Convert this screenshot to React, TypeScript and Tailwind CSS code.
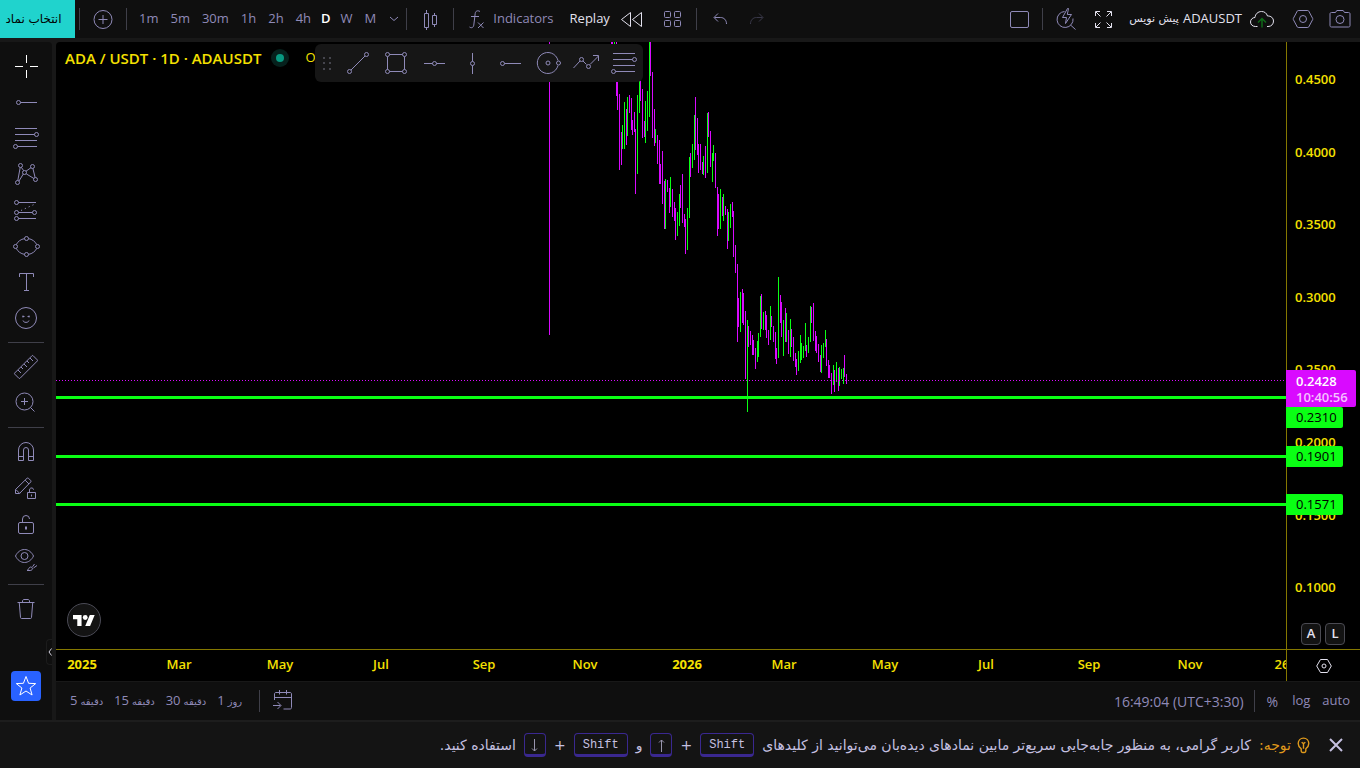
import type { ReactNode } from "react";

type Candle = [x: number, high: number, low: number, up: 0 | 1];

// one entry per bar: x, top and bottom in pane pixels, and direction
const CANDLES: Candle[] = [
  [493, 0, 293, 0], [555, 0, 30, 0], [556, 0, 34, 0], [558, 0, 20, 1], [560, 0, 54, 0], [561, 20, 68, 0],
  [563, 52, 128, 0], [565, 90, 123, 0], [566, 83, 107, 1], [568, 60, 107, 1], [570, 67, 103, 0], [571, 55, 94, 1],
  [573, 53, 71, 0], [575, 56, 88, 0], [576, 78, 93, 0], [578, 70, 90, 0], [579, 87, 152, 0], [581, 53, 132, 1],
  [583, 33, 71, 1], [584, 28, 59, 0], [586, 47, 96, 0], [588, 79, 95, 0], [589, 59, 101, 1], [591, 49, 89, 1],
  [593, 0, 75, 1], [594, 0, 34, 0], [596, 30, 96, 0], [598, 67, 104, 0], [599, 87, 101, 1], [601, 93, 122, 0],
  [603, 98, 142, 0], [604, 122, 142, 0], [606, 109, 162, 0], [608, 139, 187, 0], [609, 137, 187, 1], [611, 138, 150, 0],
  [613, 146, 171, 0], [614, 135, 165, 1], [616, 147, 175, 0], [618, 160, 179, 0], [619, 166, 198, 0], [621, 170, 194, 1],
  [623, 152, 184, 1], [624, 143, 166, 0], [626, 132, 181, 0], [628, 172, 185, 0], [629, 177, 212, 0], [631, 166, 208, 1],
  [633, 115, 176, 1], [634, 111, 135, 0], [636, 102, 126, 1], [638, 73, 118, 1], [639, 55, 108, 0], [641, 76, 113, 0],
  [642, 102, 131, 0], [644, 102, 128, 0], [646, 120, 132, 0], [647, 114, 133, 1], [649, 104, 136, 0], [651, 71, 131, 1],
  [652, 70, 95, 0], [654, 89, 125, 0], [656, 111, 140, 1], [657, 103, 119, 1], [659, 111, 146, 0], [661, 145, 194, 0],
  [662, 152, 187, 0], [664, 147, 187, 1], [666, 155, 174, 0], [667, 152, 179, 1], [669, 164, 173, 0], [671, 167, 207, 0],
  [672, 170, 199, 1], [674, 162, 186, 1], [676, 160, 175, 0], [677, 169, 215, 0], [679, 203, 231, 0], [681, 222, 300, 0],
  [682, 256, 285, 0], [684, 250, 290, 1], [686, 247, 281, 0], [687, 251, 283, 0], [689, 269, 337, 0], [691, 278, 370, 1],
  [692, 284, 305, 0], [694, 289, 303, 0], [696, 293, 313, 0], [697, 298, 313, 0], [699, 306, 327, 0], [701, 299, 320, 1],
  [702, 291, 315, 1], [704, 254, 295, 1], [705, 252, 287, 0], [707, 270, 288, 1], [709, 269, 288, 0], [710, 273, 296, 0],
  [712, 288, 303, 0], [714, 264, 298, 1], [715, 274, 285, 0], [717, 284, 300, 0], [719, 290, 317, 0], [720, 306, 322, 0],
  [722, 235, 316, 1], [724, 253, 281, 0], [725, 260, 295, 0], [727, 278, 314, 1], [729, 266, 300, 0], [730, 271, 300, 1],
  [732, 288, 312, 0], [734, 277, 315, 1], [735, 287, 305, 0], [737, 295, 319, 0], [739, 311, 325, 0], [740, 317, 333, 0],
  [742, 309, 329, 1], [744, 293, 321, 1], [745, 301, 318, 1], [747, 304, 316, 1], [749, 281, 309, 1], [750, 303, 315, 0],
  [752, 295, 311, 1], [754, 264, 300, 1], [755, 265, 281, 0], [757, 261, 299, 0], [759, 289, 309, 0], [760, 294, 311, 0],
  [762, 302, 320, 0], [764, 313, 330, 0], [765, 303, 331, 1], [767, 301, 316, 1], [769, 288, 305, 1], [770, 297, 324, 0],
  [772, 318, 336, 0], [773, 323, 336, 0], [775, 331, 352, 0], [777, 323, 343, 1], [778, 328, 350, 0], [780, 320, 340, 1],
  [782, 326, 349, 0], [783, 325, 344, 1], [785, 327, 337, 1], [787, 326, 342, 1], [788, 313, 335, 0], [790, 332, 342, 0],
];

const LEVELS = [0.231, 0.1901, 0.1571];
const PRICES = [0.45, 0.4, 0.35, 0.3, 0.25, 0.2, 0.15, 0.1];

const MONTHS = [
  { x: 26, label: "2025", year: true },
  { x: 123, label: "Mar" },
  { x: 224, label: "May" },
  { x: 325, label: "Jul" },
  { x: 428, label: "Sep" },
  { x: 529, label: "Nov" },
  { x: 631, label: "2026", year: true },
  { x: 728, label: "Mar" },
  { x: 829, label: "May" },
  { x: 930, label: "Jul" },
  { x: 1033, label: "Sep" },
  { x: 1134, label: "Nov" },
  { x: 1226, label: "26" },
];

const priceToY = (price: number) => Math.round(37 + (0.45 - price) * 1452);

const Icon = ({ children, className = "" }: { children: ReactNode; className?: string }) => (
  <svg
    width="28"
    height="28"
    viewBox="0 0 28 28"
    fill="none"
    stroke="currentColor"
    className={`shrink-0 ${className}`}
    aria-hidden="true"
  >
    {children}
  </svg>
);

const Separator = () => <span className="h-[22px] w-px shrink-0 bg-[#3f3f49]" />;

const FibLines = () => (
  <>
    <path d="M3 4.5h22M3 10.5h19.5M3 16.5h22M5.5 22.5H25" />
    <circle cx="24.5" cy="10.5" r="2" />
    <circle cx="3.5" cy="22.5" r="2" />
  </>
);

const Hexagon = () => (
  <>
    <path d="M9.2 5.5h9.6c.4 0 .7.2.9.5l4 7.5c.2.3.2.7 0 1l-4 7.5c-.2.3-.5.5-.9.5H9.2c-.4 0-.7-.2-.9-.5l-4-7.5a1 1 0 0 1 0-1l4-7.5c.2-.3.5-.5.9-.5z" />
    <circle cx="14" cy="14" r="3.5" />
  </>
);

const TOOL_GROUPS: { name: string; icon: ReactNode }[][] = [
  [
    { name: "Cross", icon: <path stroke="#ffffff" d="M14.5 3v8M14.5 18v8M3 14.5h8M18 14.5h8" /> },
    {
      name: "Horizontal ray",
      icon: (
        <>
          <circle cx="6.5" cy="14.5" r="2" />
          <path d="M8.5 14.5H25" />
        </>
      ),
    },
    { name: "Fib retracement", icon: <FibLines /> },
    {
      name: "XABCD pattern",
      icon: (
        <>
          <path d="M5.8 20.5 8.2 7.5M7 21l4.3-7M9.3 7.3l2.4 3.4M14 11.2l5-3.5M14.2 13.8l7.7 4.7M20.9 8.5l2.2 9" />
          <circle cx="5.5" cy="22.5" r="2" />
          <circle cx="8.5" cy="5.5" r="2" />
          <circle cx="12.5" cy="12.5" r="2" />
          <circle cx="20.5" cy="6.5" r="2" />
          <circle cx="23.5" cy="19.5" r="2" />
        </>
      ),
    },
    {
      name: "Long position",
      icon: (
        <>
          <path d="M6.5 6.5H24M6.5 16.5h14M6.5 22.5H24" />
          <path d="M9 14.5 23 8" strokeDasharray="1.2 3" />
          <circle cx="4.5" cy="6.5" r="2" />
          <circle cx="4.5" cy="16.5" r="2" />
          <circle cx="22.5" cy="16.5" r="2" />
          <circle cx="4.5" cy="22.5" r="2" />
        </>
      ),
    },
    {
      name: "Ellipse",
      icon: (
        <>
          <path d="M4.3 12.5c1.5-3 4.6-5.3 8.2-5.9M16.5 6.6c3.6.6 6.7 2.9 8.2 5.9M24.7 16.5c-1.5 3-4.6 5.3-8.2 5.9M12.5 22.4c-3.6-.6-6.7-2.9-8.2-5.9" />
          <circle cx="14.5" cy="6.5" r="2" />
          <circle cx="14.5" cy="22.5" r="2" />
          <circle cx="3.5" cy="14.5" r="2" />
          <circle cx="25.5" cy="14.5" r="2" />
        </>
      ),
    },
    { name: "Text", icon: <path d="M7.5 9V5.5h14V9M14.5 5.5v17M12 22.5h5" /> },
    {
      name: "Emoji",
      icon: (
        <>
          <circle cx="14" cy="14" r="10.5" />
          <path d="M11 11.5v2M17 11.5v2M10.5 12.5h2M15.5 12.5h2M11 16.5c.6 2.5 5.4 2.5 6 0" />
        </>
      ),
    },
  ],
  [
    {
      name: "Measure",
      icon: (
        <path d="M20 2.7 2.7 20a.8.8 0 0 0 0 1.1l4.2 4.2c.3.3.8.3 1.1 0L25.3 8c.3-.3.3-.8 0-1.1l-4.2-4.2a.8.8 0 0 0-1.1 0zM6 17l3 3M9 14l2 2M12 11l3 3M15 8l2 2M18 5l3 3" />
      ),
    },
    {
      name: "Zoom in",
      icon: (
        <>
          <circle cx="12.5" cy="12.5" r="8.5" />
          <path d="M12.5 9v7M9 12.5h7M18.5 18.5l4 4" />
        </>
      ),
    },
  ],
  [
    {
      name: "Magnet mode",
      icon: <path d="M6.5 22.5V12a7.5 7.5 0 0 1 15 0v10.5h-5V12a2.5 2.5 0 0 0-5 0v10.5zM6.5 18.5h5M16.5 18.5h5" />,
    },
    {
      name: "Stay in drawing mode",
      icon: (
        <>
          <path d="M3.5 19.5v-4L15 4.3c.4-.4 1.1-.4 1.5 0l2.2 2.2c.4.4.4 1.1 0 1.5L7.5 19.5zM3.8 15.5l4 4M13.2 6.2l3.8 3.8" />
          <path d="M15.5 18.5h8v6h-8zM17.5 18.5V16c0-2.7 4-2.7 4-.3M19.5 20.5v2" />
        </>
      ),
    },
    {
      name: "Lock all drawings",
      icon: (
        <>
          <rect x="6.5" y="12.5" width="15" height="11" rx="1.5" />
          <path d="M10.5 12.5V9a3.5 3.5 0 0 1 7 0" />
          <path d="M14 16.5v3" strokeWidth="2" />
        </>
      ),
    },
    {
      name: "Hide all drawings",
      icon: (
        <>
          <path d="M3.5 10c1.8-3.9 5.2-6.5 9-6.5s7.2 2.6 9 6.5c-1.8 3.9-5.2 6.5-9 6.5s-7.2-2.6-9-6.5z" />
          <circle cx="12.5" cy="10" r="3.5" />
          <path d="M15 24.5c1.8-.3 1.5-3.5 3.7-3.5 2.3 0 2.5 3.3-.5 3.5zM20.5 20.8l2-2.8M21.5 22l3.5-2.5" />
        </>
      ),
    },
  ],
  [
    {
      name: "Remove objects",
      icon: (
        <path d="M5.5 7.5h17M10.5 7.5V6c0-.8.7-1.5 1.5-1.5h4c.8 0 1.5.7 1.5 1.5v1.5M7.3 8l1.2 14.5c0 .6.5 1 1 1h9c.5 0 1-.4 1-1L20.7 8" />
      ),
    },
  ],
];

const FAVORITES: { name: string; icon: ReactNode }[] = [
  {
    name: "Trend line",
    icon: (
      <>
        <circle cx="5.5" cy="22.5" r="2" />
        <circle cx="22.5" cy="5.5" r="2" />
        <path d="M7 21 21 7" />
      </>
    ),
  },
  {
    name: "Rectangle",
    icon: (
      <>
        <path d="M7.5 5.5h13M7.5 22.5h13M5.5 7.5v13M22.5 7.5v13" />
        <circle cx="5.5" cy="5.5" r="2" />
        <circle cx="22.5" cy="5.5" r="2" />
        <circle cx="5.5" cy="22.5" r="2" />
        <circle cx="22.5" cy="22.5" r="2" />
      </>
    ),
  },
  {
    name: "Horizontal line",
    icon: (
      <>
        <circle cx="14.5" cy="14.5" r="2" />
        <path d="M4 14.5h8.5M16.5 14.5H25" />
      </>
    ),
  },
  {
    name: "Vertical line",
    icon: (
      <>
        <circle cx="14.5" cy="14.5" r="2" />
        <path d="M14.5 4v8.5M14.5 16.5V25" />
      </>
    ),
  },
  {
    name: "Horizontal ray",
    icon: (
      <>
        <circle cx="6.5" cy="14.5" r="2" />
        <path d="M8.5 14.5H25" />
      </>
    ),
  },
  {
    name: "Circle",
    icon: (
      <>
        <path d="M24 11.5A10.5 10.5 0 1 0 24 16.5" />
        <circle cx="14" cy="14" r="2" />
        <circle cx="24.5" cy="14" r="2" />
      </>
    ),
  },
  {
    name: "Path",
    icon: (
      <>
        <path d="M1.5 19 8 12M11 12l3.5 3.5M18 15.5 26.5 7M21 6.5h5.5V12" />
        <circle cx="9.5" cy="10.5" r="2" />
        <circle cx="16.5" cy="17.5" r="2" />
      </>
    ),
  },
  { name: "Fib retracement", icon: <FibLines /> },
];

const TopBar = () => (
  <header className="flex h-[38px] items-center bg-[#0f0f0f] text-[#8f8ab8]">
    <button
      dir="rtl"
      className="h-full w-[75px] shrink-0 bg-[#20d3cd] pr-2 font-['DejaVu_Sans',sans-serif] text-[12px] text-black"
    >
      انتخاب نماد
    </button>
    <span className="w-1" />
    <Separator />
    <button aria-label="Compare symbols" className="flex w-[46px] justify-center">
      <Icon>
        <circle cx="14" cy="14.5" r="9" />
        <path d="M14 10v9M9.5 14.5h9" />
      </Icon>
    </button>
    <Separator />
    <div className="flex items-center pl-1.5">
      {["1m", "5m", "30m", "1h", "2h", "4h", "D", "W", "M"].map((frame) => (
        <button key={frame} className={frame === "D" ? "px-1 font-semibold text-white" : "px-1.5"}>
          {frame}
        </button>
      ))}
    </div>
    <button aria-label="More intervals" className="flex w-6 justify-center">
      <svg width="10" height="6" viewBox="0 0 10 6" fill="none" stroke="currentColor">
        <path d="m1 1 4 3.5L9 1" />
      </svg>
    </button>
    <Separator />
    <button aria-label="Bar style" className="flex w-[46px] justify-center">
      <Icon>
        <path d="M8.5 8.5h4v14h-4zM10.5 5v3.5M10.5 22.5V25M16.5 10.5h4v9h-4zM18.5 8v2.5M18.5 19.5V22" />
      </Icon>
    </button>
    <Separator />
    <button className="flex items-center pr-2.5 pl-2">
      <Icon>
        <path d="M18 6.5c-2.5-1.5-4.5-.5-4.8 2L11.8 20c-.3 2.5-2.3 3.5-4.3 2M9 11.5h8M16 17.5l5.5 5.5M21.5 17.5 16 23" />
      </Icon>
      <span className="pl-[3px]">Indicators</span>
    </button>
    <button className="flex items-center px-1.5 text-[#e3e1ee]">
      Replay
      <Icon className="ml-2">
        <path d="M12.5 7.5v14l-9-7zM23.5 7.5v14l-9-7z" />
      </Icon>
    </button>
    <button aria-label="Layouts" className="flex w-10 justify-center">
      <Icon>
        <rect x="6.5" y="6.5" width="6" height="6" rx="1" />
        <rect x="16.5" y="6.5" width="6" height="6" rx="1" />
        <rect x="6.5" y="15.5" width="6" height="6" rx="1" />
        <rect x="16.5" y="15.5" width="6" height="6" rx="1" />
      </Icon>
    </button>
    <span className="w-1" />
    <Separator />
    <button aria-label="Undo" className="flex w-[46px] justify-center">
      <Icon>
        <path d="M12 8.5l-4 4 4 4M8.5 12.5h6c3.5 0 6 2.5 6 6.5" />
      </Icon>
    </button>
    <button aria-label="Redo" className="flex w-7 justify-center text-[#3a394a]">
      <Icon>
        <path d="M16 8.5l4 4-4 4M19.5 12.5h-6c-3.5 0-6 2.5-6 6.5" />
      </Icon>
    </button>

    <div className="ml-auto flex items-center">
      <button aria-label="Layout setup" className="flex w-[46px] justify-center">
        <Icon>
          <rect x="5.5" y="6.5" width="18" height="16" rx="1.5" />
        </Icon>
      </button>
      <Separator />
      <button aria-label="Quick search" className="flex w-[46px] justify-center">
        <Icon>
          <path d="M12.5 6.5a8 8 0 1 0 8.5 7M18.5 20l5 4.5M15.5 3.5l-5 9h4l-1 6 6-9h-4.2l1.2-6z" />
        </Icon>
      </button>
      <button aria-label="Fullscreen" className="flex w-7 justify-center text-[#e3e1ee]">
        <Icon>
          <path d="M6.5 11V6.5H11M7 7l4.5 4.5M18 6.5h4.5V11M22 7l-4.5 4.5M6.5 18v4.5H11M7 22l4.5-4.5M18 22.5h4.5V18M22 22l-4.5-4.5" />
        </Icon>
      </button>
      <button className="flex items-center gap-1 pr-1 pl-3 text-[#e3e1ee]">
        <span className="font-['DejaVu_Sans',sans-serif] text-[11px]">پیش نویس</span>
        <span>ADAUSDT</span>
        <Icon className="ml-0.5">
          <path d="M9.5 21.5h-2c-3 0-5-2-5-4.5s2-4.5 4.5-4.5c.3-3.5 3-6 6.5-6 3 0 5 1.5 6 4.5 3.5-.2 6 2 6 5s-2 5.5-5.5 5.5h-1" />
          <path stroke="#0f6b18" strokeWidth="1.5" d="M14 22.5V14M10 17.5l4-4 4 4" />
        </Icon>
      </button>
      <button aria-label="Chart settings" className="flex w-[46px] justify-center">
        <Icon>
          <Hexagon />
        </Icon>
      </button>
      <button aria-label="Snapshot" className="mr-1.5 flex w-7 justify-center">
        <Icon>
          <path d="M5.5 7.5h4l1.3-2h6.4l1.3 2h4c1 0 1.5.5 1.5 1.5v11.5c0 1-.5 1.5-1.5 1.5h-17c-1 0-1.5-.5-1.5-1.5V9c0-1 .5-1.5 1.5-1.5z" />
          <circle cx="14" cy="14.5" r="4" />
        </Icon>
      </button>
    </div>
  </header>
);

const DrawingTools = () => (
  <aside className="relative flex w-[52px] shrink-0 flex-col items-center rounded-tr bg-[#0f0f0f] pt-1.5 text-[#8f8ab8]">
    {TOOL_GROUPS.map((group, index) => (
      <div key={index} className="flex w-full flex-col items-center">
        {index > 0 && <span className="my-1.5 h-px w-9 bg-[#3f3f49]" />}
        {group.map((tool) => (
          <button key={tool.name} aria-label={tool.name} className="flex h-9 w-full items-center justify-center">
            <Icon>{tool.icon}</Icon>
          </button>
        ))}
      </div>
    ))}
    <button
      aria-label="Favorite drawing tools"
      className="mt-auto mb-[19px] flex size-[30px] items-center justify-center rounded bg-[#2962ff] text-white"
    >
      <Icon>
        <path d="m14 4.5 2.6 6.8 7.1.3-5.6 4.4 2 7L14 19l-6.1 4 2-7-5.6-4.4 7.1-.3z" />
      </Icon>
    </button>
    <button
      aria-label="Hide toolbar"
      className="absolute right-0 bottom-[55px] flex h-[26px] w-1.5 items-center justify-end rounded-l border-y border-l border-[#1c1c1c] text-[#d0cfdc]"
    >
      <svg width="4" height="8" viewBox="0 0 4 8" fill="none" stroke="currentColor" className="shrink-0">
        <path d="M3.5.5 1 4l2.5 3.5" />
      </svg>
    </button>
  </aside>
);

const FavoritesBar = () => (
  <div className="absolute top-0.5 left-[259px] flex h-[38px] items-center rounded-md bg-[#161616] text-[#8f8ab8]">
    <svg width="24" height="14" viewBox="0 0 24 14" fill="#45454d" aria-hidden="true">
      {[1, 6, 12].map((y) => (
        <g key={y}>
          <rect x="8" y={y} width="2" height="2" />
          <rect x="14" y={y} width="2" height="2" />
        </g>
      ))}
    </svg>
    {FAVORITES.map((tool) => (
      <button key={tool.name} aria-label={tool.name} className="flex w-[38px] justify-center">
        <Icon>{tool.icon}</Icon>
      </button>
    ))}
  </div>
);

const Pane = () => (
  <div className="relative min-w-0 flex-1 overflow-hidden">
    <svg className="absolute inset-0 size-full" shapeRendering="crispEdges">
      {CANDLES.map(([x, high, low, up]) => (
        <rect key={x} x={x} y={high} width="1" height={low - high} fill={up ? "#0aff14" : "#d90aff"} />
      ))}
      <line x1="0" x2="100%" y1="338.5" y2="338.5" stroke="#d90aff" strokeDasharray="1 2" />
      {LEVELS.map((price) => (
        <rect key={price} x="0" y={priceToY(price) - 1} width="100%" height="3" fill="#0aff14" />
      ))}
    </svg>
    <div className="relative flex h-8 items-center pl-[9px] font-semibold text-[#f5e000]">
      <h1 className="text-[15px]">ADA / USDT · 1D · ADAUSDT</h1>
      <span className="ml-2.5 flex size-[18px] items-center justify-center rounded-full bg-[#06211d]">
        <span className="size-2 rounded-full bg-[#089981]" />
      </span>
      <span className="ml-4 font-normal">O</span>
    </div>
    <FavoritesBar />
    <a
      href="#tradingview"
      aria-label="TradingView"
      className="absolute bottom-3 left-[11px] flex size-[34px] items-center justify-center rounded-full border border-[#4a4a55] bg-[#131313]"
    >
      <svg width="22" height="11" viewBox="0 4 36 18" fill="#ffffff">
        <path d="M14 22H7V11H0V4h14v18ZM28 22h-8l7.5-18h8L28 22Z" />
        <circle cx="20" cy="8" r="4" />
      </svg>
    </a>
  </div>
);

const PriceAxis = () => (
  <div className="relative w-[74px] shrink-0 border-l border-[#857800] font-semibold text-[#f5e000]">
    {PRICES.map((price) => (
      <span
        key={price}
        className="absolute left-2 -translate-y-1/2 leading-5"
        style={{ top: priceToY(price) }}
      >
        {price.toFixed(4)}
      </span>
    ))}
    {LEVELS.map((price, index) => (
      <span
        key={price}
        className="absolute -left-px h-[21px] w-[57px] rounded-r-xs bg-[#0aff14] pl-2.5 font-normal leading-[21px] text-black"
        style={{ top: priceToY(price) + (index === 0 ? 10 : -10) }}
      >
        {price.toFixed(4)}
      </span>
    ))}
    <div
      className="absolute -left-px flex h-[37px] w-[70px] flex-col justify-center rounded-r-xs bg-[#d90aff] pl-2.5 leading-4 text-white"
      style={{ top: priceToY(0.2428) - 10 }}
    >
      <span>0.2428</span>
      <span className="text-white/75">10:40:56</span>
    </div>
    <div className="absolute right-[15px] bottom-1 flex gap-1 text-[#e3e1ee]">
      {["A", "L"].map((mode) => (
        <button
          key={mode}
          className="flex h-[22px] w-5 items-center justify-center rounded border border-[#4a4a52] bg-[#131313]"
        >
          {mode}
        </button>
      ))}
    </div>
  </div>
);

const TimeAxis = () => (
  <div className="flex h-8 shrink-0 border-t border-[#857800]">
    <div className="relative min-w-0 flex-1 overflow-hidden text-[#f5e000]">
      {MONTHS.map((month) => (
        <span
          key={month.x}
          className={`absolute top-1 -translate-x-1/2 leading-5 ${month.year ? "font-bold" : "font-semibold"}`}
          style={{ left: month.x }}
        >
          {month.label}
        </span>
      ))}
    </div>
    <button
      aria-label="Axis settings"
      className="flex w-[74px] items-center justify-center border-l border-[#857800] text-[#e3e1ee]"
    >
      <svg width="16" height="14" viewBox="0 0 16 14" fill="none" stroke="currentColor">
        <path d="M4.5.5h7L15.3 7l-3.8 6.5h-7L.7 7z" />
        <circle cx="8" cy="7" r="2" />
      </svg>
    </button>
  </div>
);

const RangeBar = () => (
  <div className="mt-px flex h-[38px] shrink-0 items-center bg-[#0f0f0f] pr-2.5 pl-3.5 text-[#8f8ab8]">
    <div className="flex gap-[11px]">
      {[
        ["5", "دقیقه"],
        ["15", "دقیقه"],
        ["30", "دقیقه"],
        ["1", "روز"],
      ].map(([count, unit]) => (
        <button key={count} className="flex items-center gap-[3px]">
          {count}
          <span className="font-['DejaVu_Sans',sans-serif] text-[10px]">{unit}</span>
        </button>
      ))}
    </div>
    <span className="w-[17px]" />
    <Separator />
    <button aria-label="Go to date" className="flex w-[46px] justify-center">
      <Icon>
        <path d="M5.5 13V7c0-1 .5-1.5 1.5-1.5h14c1 0 1.5.5 1.5 1.5v13.5c0 1-.5 1.5-1.5 1.5h-6.5M5.5 10.5h17M10.5 3v4.5M17.5 3v4.5M4 18.5h7.5M8.5 15l3.5 3.5L8.5 22" />
      </Icon>
    </button>
    <div className="ml-auto flex items-center">
      <button className="text-[14px]">16:49:04 (UTC+3:30)</button>
      <span className="w-2.5" />
      <Separator />
      <button className="ml-3 text-[14px]">%</button>
      <button className="ml-3.5">log</button>
      <button className="ml-3">auto</button>
    </div>
  </div>
);

const Key = ({ children }: { children: ReactNode }) => (
  <kbd className="flex h-6 min-w-[22px] items-center justify-center rounded border border-b-3 border-[#3a2890] px-1 pt-0.5 font-['Liberation_Mono',monospace] text-[12px]">
    {children}
  </kbd>
);

const Arrow = ({ down = false }: { down?: boolean }) => (
  <svg
    width="7"
    height="13"
    viewBox="0 0 7 13"
    fill="none"
    stroke="currentColor"
    className={down ? "rotate-180 opacity-75" : "opacity-75"}
  >
    <path d="M3.5 13V1M1 3.5 3.5 1 6 3.5" />
  </svg>
);

const Notice = () => (
  <footer
    dir="rtl"
    className="flex h-[46px] shrink-0 items-center bg-[#141414] px-4 font-['DejaVu_Sans',sans-serif] text-[14px] whitespace-nowrap text-[#c5c0e0]"
  >
    <button aria-label="بستن" className="ml-[18px] flex size-4 items-center justify-center">
      <svg width="14" height="14" viewBox="0 0 14 14" stroke="currentColor" strokeWidth="2">
        <path d="m1 1 12 12M13 1 1 13" />
      </svg>
    </button>
    <svg
      width="13"
      height="17"
      viewBox="0 0 14 18"
      fill="none"
      stroke="#e09a1c"
      strokeWidth="1.5"
      className="ml-1.5 shrink-0"
    >
      <path d="M4.5 12.5C2.5 11 1.3 9.2 1.3 6.8 1.3 3.5 3.8 1 7 1s5.7 2.5 5.7 5.8c0 2.4-1.2 4.2-3.2 5.7V15A1.5 1.5 0 0 1 8 16.5H6A1.5 1.5 0 0 1 4.5 15zM7 12.5V7M5 5.5 7 7l2-1.5" />
    </svg>
    <span className="ml-2 text-[#e09a1c]">توجه:</span>
    <p className="flex items-center gap-2">
      <span>کاربر گرامی، به منظور جابه‌جایی سریع‌تر مابین نمادهای دیده‌بان می‌توانید از کلیدهای</span>
      <Key>
        <span className="px-1">Shift</span>
      </Key>
      <span>+</span>
      <Key>
        <Arrow />
      </Key>
      <span>و</span>
      <Key>
        <span className="px-1">Shift</span>
      </Key>
      <span>+</span>
      <Key>
        <Arrow down />
      </Key>
      <span>استفاده کنید.</span>
    </p>
  </footer>
);

export default function App() {
  return (
    <div className="flex h-screen flex-col overflow-hidden bg-[#181818] font-['Open_Sans',sans-serif] text-[13px]">
      <TopBar />
      <div className="mt-1 flex min-h-0 flex-1 gap-1">
        <DrawingTools />
        <main className="flex min-w-0 flex-1 flex-col">
          <div className="flex min-h-0 flex-1 flex-col overflow-hidden rounded-tl bg-black">
            <div className="flex min-h-0 flex-1">
              <Pane />
              <PriceAxis />
            </div>
            <TimeAxis />
          </div>
          <RangeBar />
        </main>
      </div>
      <div className="h-0.5 shrink-0 bg-[#1d1d1d]" />
      <Notice />
    </div>
  );
}
